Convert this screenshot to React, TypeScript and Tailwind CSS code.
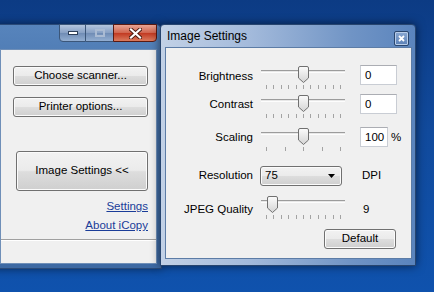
import React from 'react';

const btnFace =
  'rounded-[3px] border border-[#707070] bg-[linear-gradient(to_bottom,#f2f2f2_0%,#ebebeb_48%,#dddddd_52%,#cfcfcf_100%)] shadow-[inset_0_0_0_1px_#fbfbfb] text-[11.5px] text-black';
const btn = `flex items-center justify-center ${btnFace}`;

function Thumb() {
  return (
    <svg width="11" height="17" viewBox="0 0 11 17">
      <defs>
        <linearGradient id="tg" x1="0" y1="0" x2="0" y2="1">
          <stop offset="0" stopColor="#fbfbfb" />
          <stop offset="1" stopColor="#d4d4d4" />
        </linearGradient>
      </defs>
      <path d="M2 0.5 H9 Q10.5 0.5 10.5 2 V12 L5.5 16.5 L0.5 12 V2 Q0.5 0.5 2 0.5 Z" fill="url(#tg)" stroke="#707070" />
    </svg>
  );
}

// trackbar: track line, thumb and tick row
function Slider({ pos, ticks }: { pos: number; ticks: number }) {
  return (
    <div className="relative w-[84px] h-[26px]">
      <div className="absolute left-0 right-0 top-[6px] h-[3px] border-t border-t-[#9c9c9c] border-b border-b-[#fdfdfd] bg-[#e7e7e7]" />
      <div className="absolute top-[2px]" style={{ left: pos }}>
        <Thumb />
      </div>
      <div className="absolute left-[5px] right-[4px] top-[21px] flex justify-between">
        {Array.from({ length: ticks }).map((_, i) => (
          <div key={i} className="w-px h-[4px] bg-[#a3a3a3]" />
        ))}
      </div>
    </div>
  );
}

function TextBox({ value, w }: { value: string; w: string }) {
  return (
    <div className={`${w} h-[20px] mt-[1px] bg-white border border-[#c9cdd4] border-t-[#abadb3] pl-[4px] text-[11.5px] leading-[18px]`}>
      {value}
    </div>
  );
}

function MainWindow() {
  return (
    <div className="absolute left-[-8px] top-[24px] w-[170px] h-[245px] rounded-t-[6px] border border-[#2a4a78] bg-[linear-gradient(to_bottom,#5784bc_0%,#4370a9_35%,#3d69a3_100%)] shadow-[0_0_8px_rgba(0,0,0,0.5)] flex flex-col pl-[7px] pr-[4px] pb-[4px]">
      <div className="h-[25px] flex justify-end items-start -mt-px">
        <div className="w-[27px] h-[18px] rounded-bl-[4px] border border-[#3b5679] bg-[linear-gradient(to_bottom,#b3c5de,#869fc3_50%,#6f8cb5_51%,#93aed1)] flex items-center justify-center">
          <div className="w-[10px] h-[4px] bg-white border border-[#2c3e58]" />
        </div>
        <div className="w-[27px] h-[18px] border-y border-[#3b5679] bg-[linear-gradient(to_bottom,#b3c5de,#869fc3_50%,#6f8cb5_51%,#93aed1)] flex items-center justify-center">
          <div className="w-[10px] h-[8px] border-2 border-[#aabbd3] bg-transparent" />
        </div>
        <div className="w-[44px] h-[18px] rounded-br-[4px] border border-[#5a1a12] bg-[linear-gradient(to_bottom,#e8a493,#d1654f_48%,#c23a22_52%,#da7b5e)] flex items-center justify-center">
          <svg width="13" height="11" viewBox="0 0 13 11">
            <path d="M2 1.5 L11 9.5 M11 1.5 L2 9.5" stroke="#4a1a10" strokeWidth="4" strokeLinecap="square" />
            <path d="M2 1.5 L11 9.5 M11 1.5 L2 9.5" stroke="#ffffff" strokeWidth="2.2" strokeLinecap="square" />
          </svg>
        </div>
      </div>
      <div className="flex-1 border border-[#6f8fb8] bg-[#f0f0f0] flex flex-col">
        <div className="flex flex-col items-end pr-[8px]">
          <button className={`${btn} w-[135px] h-[20px] mt-[16px]`}>Choose scanner...</button>
          <button className={`${btn} w-[135px] h-[20px] mt-[11px]`}>Printer options...</button>
          <button className={`${btn} w-[132px] h-[40px] mt-[34px] border-[#3c7fb1] shadow-[inset_0_0_0_1px_#c5e6f7]`}>
            Image Settings &lt;&lt;
          </button>
          <a className="mt-[8px] text-[11.5px] leading-[15px] text-[#1a3c98] underline">Settings</a>
          <a className="mt-[4px] text-[11.5px] leading-[15px] text-[#1a3c98] underline">About iCopy</a>
        </div>
        <div className="flex-1 mt-[6px] border-t border-t-[#a0a0a0] bg-[#f0f0f0] shadow-[inset_0_1px_0_#ffffff]" />
      </div>
    </div>
  );
}

function SettingsDialog() {
  return (
    <div className="absolute left-[160px] top-[24px] w-[256px] h-[242px] rounded-t-[4px] border border-[#27456f] bg-[linear-gradient(to_right,#c2d1e6_0%,#a3badb_35%,#7094c5_75%,#5a84bd_100%)] shadow-[0_0_10px_rgba(0,0,0,0.55)] flex flex-col pl-[4px] pr-[3px] pb-[6px]">
      <div className="h-[22px] flex items-center justify-between pl-[2px] pr-[3px]">
        <span className="text-[12px] text-black">Image Settings</span>
        <div className="w-[15px] h-[15px] mt-[4px] rounded-[2px] border border-[#2a466e] bg-[linear-gradient(to_bottom,#8aa8d2,#5a80b6)] shadow-[inset_0_0_0_1px_#b9cde8] flex items-center justify-center">
          <svg width="7" height="7" viewBox="0 0 7 7">
            <path d="M1 1 L6 6 M6 1 L1 6" stroke="#ffffff" strokeWidth="1.8" />
          </svg>
        </div>
      </div>
      <div className="flex-1 border border-[#5c7ca6] bg-[#f0f0f0] flex flex-col text-[11.5px] text-black">
        {/* Brightness */}
        <div className="flex mt-[16px]">
          <div className="w-[87px] h-[20px] mt-[2px] leading-[20px] text-right">Brightness</div>
          <div className="ml-[8px]"><Slider pos={37} ticks={11} /></div>
          <div className="ml-[15px]"><TextBox value="0" w="w-[37px]" /></div>
        </div>
        {/* Contrast */}
        <div className="flex mt-[3px]">
          <div className="w-[87px] h-[20px] mt-[1px] leading-[20px] text-right">Contrast</div>
          <div className="ml-[8px]"><Slider pos={37} ticks={11} /></div>
          <div className="ml-[15px]"><TextBox value="0" w="w-[37px]" /></div>
        </div>
        {/* Scaling */}
        <div className="flex mt-[7px]">
          <div className="w-[87px] h-[20px] mt-[1px] leading-[20px] text-right">Scaling</div>
          <div className="ml-[8px]"><Slider pos={37} ticks={5} /></div>
          <div className="ml-[15px] flex">
            <TextBox value="100" w="w-[28px]" />
            <span className="ml-[3px] mt-[1px] leading-[20px]">%</span>
          </div>
        </div>
        {/* Resolution */}
        <div className="flex items-center mt-[14px] h-[20px]">
          <div className="w-[87px] text-right">Resolution</div>
          <div className={`${btnFace} flex items-center justify-between ml-[7px] w-[82px] h-[20px] pl-[4px] pr-[6px]`}>
            <span>75</span>
            <svg width="7" height="4" viewBox="0 0 7 4"><path d="M0 0 H7 L3.5 4 Z" fill="#000" /></svg>
          </div>
          <span className="ml-[20px]">DPI</span>
        </div>
        {/* JPEG Quality */}
        <div className="flex mt-[8px]">
          <div className="w-[87px] h-[20px] mt-[5px] leading-[20px] text-right">JPEG Quality</div>
          <div className="ml-[8px]"><Slider pos={6} ticks={11} /></div>
          <span className="ml-[18px] mt-[5px] leading-[20px]">9</span>
        </div>
        <div className="flex justify-end pr-[15px] mt-[9px]">
          <button className={`${btn} w-[72px] h-[20px]`}>Default</button>
        </div>
      </div>
    </div>
  );
}

export default function App() {
  return (
    <div
      className="relative w-[434px] h-[292px] overflow-hidden bg-[linear-gradient(to_bottom,#0c3b84_0%,#114a9c_45%,#0f52ad_100%)]"
      style={{ fontFamily: '"Liberation Sans", Arial, sans-serif' }}
    >
      <MainWindow />
      <SettingsDialog />
    </div>
  );
}
